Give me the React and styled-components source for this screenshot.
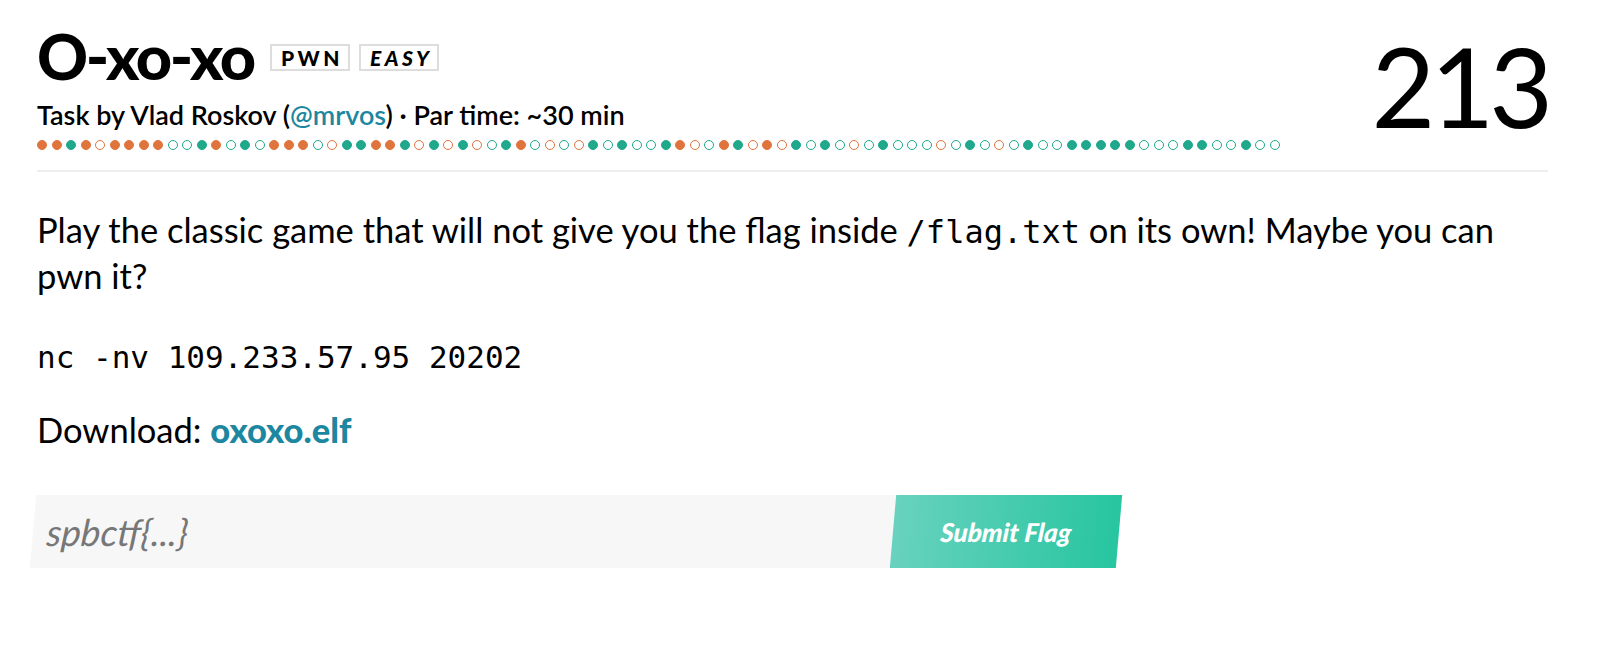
import React from 'react';
import styled, { createGlobalStyle } from 'styled-components';

const Global = createGlobalStyle`
  html, body { margin: 0; padding: 0; background: #fff; }
  body { font-family: Lato, "Noto Sans", sans-serif; color: #000; }
`;

const ORANGE = '#e0743d';
const TEAL = '#20a88d';
const LINK = '#1d87a1';

const Page = styled.div`
  padding: 24px 62px 0 37px;
`;

const Header = styled.header`
  display: flex;
  justify-content: space-between;
  align-items: flex-start;
  border-bottom: 2px solid #eeeeee;
  padding-bottom: 20px;
`;

const Left = styled.div`
  display: flex;
  flex-direction: column;
`;

const TitleRow = styled.div`
  display: flex;
  align-items: center;
  gap: 9px;
`;

const Title = styled.h1`
  margin: 0 7px 0 0;
  font-family: Lato, sans-serif;
  font-weight: 900;
  font-size: 63px;
  line-height: 64px;
  letter-spacing: -2.3px;
`;

const Badge = styled.span`
  display: inline-flex;
  align-items: center;
  justify-content: center;
  height: 27px;
  box-sizing: border-box;
  padding: 0 5px 0 9px;
  border: 2px solid #dddddd;
  font-family: Lato, sans-serif;
  font-weight: 900;
  font-size: 21px;
  line-height: 1;
  letter-spacing: 3.5px;
  font-style: ${(p) => (p.$italic ? 'italic' : 'normal')};
  margin-top: 2px;
`;

const Meta = styled.div`
  margin-top: 10px;
  font-size: 27px;
  font-weight: 600;
  line-height: 34px;
`;

const Link = styled.a`
  color: ${LINK};
  text-decoration: none;
  font-weight: ${(p) => (p.$bold ? 900 : 'inherit')};
`;

const Dots = styled.div`
  display: flex;
  gap: 4.5px;
  margin-top: 8px;
`;

const Dot = styled.span`
  width: 10px;
  height: 10px;
  border-radius: 50%;
  box-sizing: border-box;
  background: ${(p) => (p.$filled ? p.$color : '#fff')};
  border: 1.5px solid ${(p) => p.$color};
`;

const Score = styled.div`
  font-family: Lato, sans-serif;
  font-weight: 400;
  font-size: 110px;
  line-height: 110px;
  margin-top: 6px;
  letter-spacing: -5px;
`;

const Body = styled.main`
  padding-top: 35px;
`;

const Para = styled.p`
  margin: 0 0 ${(p) => p.$mb ?? 35}px;
  font-size: 34.5px;
  line-height: 46px;
`;

const Code = styled.code`
  font-family: "DejaVu Sans Mono", monospace;
  font-size: 32px;
  line-height: 1;
`;

const Cmd = styled.div`
  font-family: "DejaVu Sans Mono", monospace;
  font-size: 31px;
  line-height: 46px;
  margin-bottom: 27px;
`;

const Form = styled.form`
  display: flex;
  width: 1086px;
  height: 73px;
  margin-top: 42px;
  margin-left: -4px;
  transform: skewX(-5deg);
  transform-origin: 0 50%;
`;

const Input = styled.input`
  flex: 1;
  border: none;
  outline: none;
  background: #f7f7f7;
  padding: 0 14px;
  font-family: Lato, sans-serif;
  font-size: 37px;
  font-style: italic;
  color: #777;
  &::placeholder { color: #777; }
`;

const Submit = styled.button`
  width: 226px;
  border: none;
  background: linear-gradient(90deg, #68d2bf 0%, #27c5a0 100%);
  color: #fff;
  font-family: Lato, sans-serif;
  font-weight: 900;
  font-style: italic;
  font-size: 26px;
  cursor: pointer;
`;

const SEQ =
  'OOTOoOOOOt' + 'tTOtTtOOOt' + 'oTTOOToToT' + 'otTOtotoTt' + 'TttTOotOTo' +
  'OoTtTtotTt' + 'ttotTtotTt' + 'tTTTTTtttT' + 'TttTtt';

export default function App() {
  return (
    <Page>
      <Global />
      <Header>
        <Left>
          <TitleRow>
            <Title>O-xo-xo</Title>
            <Badge>PWN</Badge>
            <Badge $italic>EASY</Badge>
          </TitleRow>
          <Meta>
            Task by Vlad Roskov (<Link href="#">@mrvos</Link>) · Par time: ~30 min
          </Meta>
          <Dots>
            {SEQ.split('').map((c, i) => (
              <Dot
                key={i}
                $color={c === 'O' || c === 'o' ? ORANGE : TEAL}
                $filled={c === 'O' || c === 'T'}
              />
            ))}
          </Dots>
        </Left>
        <Score>213</Score>
      </Header>
      <Body>
        <Para>
          Play the classic game that will not give you the flag inside <Code>/flag.txt</Code> on its own! Maybe you can pwn it?
        </Para>
        <Cmd>nc -nv 109.233.57.95 20202</Cmd>
        <Para $mb={0}>
          Download: <Link $bold href="#">oxoxo.elf</Link>
        </Para>
        <Form onSubmit={(e) => e.preventDefault()}>
          <Input placeholder="spbctf{...}" />
          <Submit type="submit">Submit Flag</Submit>
        </Form>
      </Body>
    </Page>
  );
}
